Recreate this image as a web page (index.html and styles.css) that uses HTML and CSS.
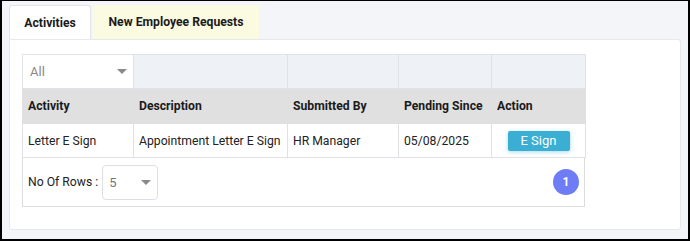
FILE: index.html
```html
<!DOCTYPE html>
<html>
<head>
<meta charset="utf-8">
<link rel="stylesheet" href="styles.css">
</head>
<body>
<div class="frame">
  <div class="tabs">
    <div class="tab active">Activities</div>
    <div class="tab alt">New Employee Requests</div>
  </div>
  <div class="panel">
    <div class="grid">
      <table>
        <colgroup>
          <col style="width:111px"><col style="width:154px"><col style="width:111px"><col style="width:93px"><col style="width:94px">
        </colgroup>
        <tr class="filter">
          <td class="selcell"><div class="sel"><span class="all">All</span><span class="caret"></span></div></td>
          <td></td><td></td><td></td><td></td>
        </tr>
        <tr class="head">
          <th>Activity</th><th>Description</th><th>Submitted By</th><th>Pending Since</th><th>Action</th>
        </tr>
        <tr class="data">
          <td>Letter E Sign</td><td>Appointment Letter E Sign</td><td>HR Manager</td><td>05/08/2025</td><td class="act"><span class="btn">E Sign</span></td>
        </tr>
      </table>
      <div class="foot">
        <div class="rows"><span class="lbl">No Of Rows :</span><div class="rsel"><span>5</span><span class="caret"></span></div></div>
        <span class="page">1</span>
      </div>
    </div>
  </div>
</div>
</body>
</html>
```
FILE: styles.css
```css
html, body { margin: 0; padding: 0; }
body { font-family: Roboto, "Liberation Sans", sans-serif; font-size: 12px; color: #222; }
.frame {
  width: 690px; height: 241px; box-sizing: border-box;
  border: 2px solid #000; border-top-width: 1px;
  background: #f3f5f9;
  padding: 4px 7px 0 7px;
}
.tabs { display: flex; gap: 2px; height: 34px; }
.tab {
  box-sizing: border-box; height: 34px; display: flex; align-items: center; justify-content: center;
  font-weight: 700; font-size: 12.2px; color: #1a1a1a; border-radius: 3px 3px 0 0;
}
.tab.active { width: 82px; background: #fff; border: 1px solid #e2e4e8; border-bottom: none; }
.tab.alt { width: 166px; background: #fbfbe1; }
.panel {
  width: 672px; height: 191px; box-sizing: border-box; background: #fff;
  border: 1px solid #e6e8ec; border-radius: 0 3px 3px 3px;
  padding: 14px 0 0 12px;
}
.grid { width: 563px; box-sizing: border-box; border: 1px solid #dadce0; border-top: none; }
table { border-collapse: collapse; width: 563px; table-layout: fixed; margin-left: -1px; }
td, th { border: 1px solid #dfe1e5; padding: 0 5px; text-align: left; white-space: nowrap; }
tr.filter td { height: 33px; background: #eef1f5; border-color: #dfe3e8; }
tr.filter td.selcell { background: #fff; padding: 0; }
.sel { display: flex; align-items: center; justify-content: space-between; padding: 0 6px 0 7px; height: 33px; }
.all { color: #888; font-size: 13px; }
.caret { width: 0; height: 0; border-left: 5px solid transparent; border-right: 5px solid transparent; border-top: 5px solid #8a8a8a; }
tr.head th { height: 34px; background: #e0e0e0; font-weight: 700; font-size: 12.2px; border-color: #e0e0e0; color: #1a1a1a; }
tr.data td { height: 33px; background: #fff; color: #222; font-size: 12.2px; }
td.act { text-align: center; }
.btn {
  display: inline-block; width: 62px; height: 20px; line-height: 20px; text-align: center;
  background: #3aafd3; color: #fff; font-size: 13px; border-radius: 2px;
  box-shadow: 0 1px 4px rgba(58,175,211,0.45);
}
.foot { height: 48px; display: flex; align-items: center; justify-content: space-between; padding: 0 5px 0 5px; }
.rows { display: flex; align-items: center; gap: 4px; }
.lbl { color: #222; font-size: 12.2px; }
.rsel {
  box-sizing: border-box; width: 56px; height: 35px; border: 1px solid #dcdfe4; border-radius: 4px;
  display: flex; align-items: center; justify-content: space-between; padding: 0 6px 0 6px; color: #777; font-size: 13px;
}
.page {
  width: 26px; height: 26px; border-radius: 50%; background: #6e7cf6; color: #fff;
  display: flex; align-items: center; justify-content: center; font-size: 12px; font-weight: 700;
}
```
